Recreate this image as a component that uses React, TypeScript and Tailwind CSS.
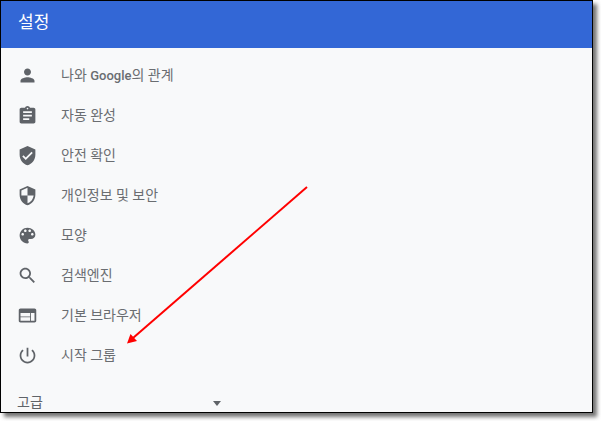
const items = [
  { label: <>나와 <span className="text-[13px] font-medium">Google</span>의 관계</>, d: "M12 12c2.21 0 4-1.79 4-4s-1.79-4-4-4-4 1.79-4 4 1.79 4 4 4zm0 2c-2.67 0-8 1.34-8 4v2h16v-2c0-2.66-5.33-4-8-4z" },
  { label: "자동 완성", d: "M19 3h-4.18C14.4 1.84 13.3 1 12 1c-1.3 0-2.4.84-2.82 2H5c-1.1 0-2 .9-2 2v14c0 1.1.9 2 2 2h14c1.1 0 2-.9 2-2V5c0-1.1-.9-2-2-2zm-7 0c.55 0 1 .45 1 1s-.45 1-1 1-1-.45-1-1 .45-1 1-1zm2 14H7v-2h7v2zm3-4H7v-2h10v2zm0-4H7V7h10v2z" },
  { label: "안전 확인", d: "M12 1L3 5v6c0 5.55 3.84 10.74 9 12 5.16-1.26 9-6.45 9-12V5l-9-4zm-2 16l-4-4 1.41-1.41L10 14.17l6.59-6.59L18 9l-8 8z" },
  { label: "개인정보 및 보안", d: "M12 1L3 5v6c0 5.55 3.84 10.74 9 12 5.16-1.26 9-6.45 9-12V5l-9-4zm0 10.99h7c-.53 4.12-3.28 7.79-7 8.94V12H5V6.3l7-3.11v8.8z" },
  { label: "모양", d: "M12 3c-4.97 0-9 4.03-9 9s4.03 9 9 9c.83 0 1.5-.67 1.5-1.5 0-.39-.15-.74-.39-1.01-.23-.26-.38-.61-.38-.99 0-.83.67-1.5 1.5-1.5H16c2.76 0 5-2.24 5-5 0-4.42-4.03-8-9-8zm-5.5 9c-.83 0-1.5-.67-1.5-1.5S5.67 9 6.5 9 8 9.67 8 10.5 7.33 12 6.5 12zm3-4C8.67 8 8 7.33 8 6.5S8.67 5 9.5 5s1.5.67 1.5 1.5S10.33 8 9.5 8zm5 0c-.83 0-1.5-.67-1.5-1.5S13.67 5 14.5 5s1.5.67 1.5 1.5S15.33 8 14.5 8zm3 4c-.83 0-1.5-.67-1.5-1.5S16.67 9 17.5 9s1.5.67 1.5 1.5-.67 1.5-1.5 1.5z" },
  { label: "검색엔진", d: "M15.5 14h-.79l-.28-.27C15.41 12.59 16 11.11 16 9.5 16 5.91 13.09 3 9.5 3S3 5.91 3 9.5 5.91 16 9.5 16c1.61 0 3.09-.59 4.23-1.57l.27.28v.79l5 4.99L20.49 19l-4.99-5zm-6 0C7.01 14 5 11.99 5 9.5S7.01 5 9.5 5 14 7.01 14 9.5 11.99 14 9.5 14z" },
  { label: "기본 브라우저", d: "M20 4H4c-1.1 0-1.99.9-1.99 2L2 18c0 1.1.9 2 2 2h16c1.1 0 2-.9 2-2V6c0-1.1-.9-2-2-2zm-5 14H4v-4h11v4zm0-5H4V9h11v4zm5 5h-4V9h4v9z" },
  { label: "시작 그룹", d: "M13 3h-2v10h2V3zm4.83 2.17l-1.42 1.42C17.99 7.86 19 9.81 19 12c0 3.87-3.13 7-7 7s-7-3.13-7-7c0-2.19 1.01-4.14 2.58-5.42L6.17 5.17C4.23 6.82 3 9.26 3 12c0 4.97 4.03 9 9 9s9-4.03 9-9c0-2.74-1.23-5.18-3.17-6.83z" },
];

export default function App() {
  return (
    <div className="relative w-[601px] h-[421px] bg-white overflow-hidden font-['Roboto','Noto_Sans_CJK_KR',sans-serif]">
      {/* Window */}
      <div className="flex flex-col w-[593px] h-[413px] border border-black bg-[#f8f9fa] overflow-hidden shadow-[4px_4px_4px_rgba(0,0,0,0.55)]">
        <header className="flex items-center h-[47px] shrink-0 pl-[17px] pb-[4px] bg-[#3367d6] text-white text-[17px]">설정</header>

        <nav className="pt-[7px] shrink-0">
          {items.map((item, i) => (
            <div key={i} className="flex items-center h-10 pl-[14px]">
              <span className="flex items-center justify-center w-6 h-6 shrink-0">
                <svg className="w-[21px] h-[21px] text-[#5f6368]" viewBox="0 0 24 24" fill="currentColor">
                  <path d={item.d} />
                </svg>
              </span>
              <span className="ml-[22px] text-[14px] text-[#6a6d71]">{item.label}</span>
            </div>
          ))}
        </nav>

        {/* Advanced */}
        <div className="flex items-center w-[220px] h-5 shrink-0 mt-[17px] pl-[16px] text-[14px] leading-5 text-[#5f6368]">
          <span className="flex-1">고급</span>
          <span className="w-0 h-0 mt-[3px] border-x-4 border-t-[5px] border-x-transparent border-t-[#5f6368]" />
        </div>
      </div>

      {/* Annotation arrow */}
      <svg className="absolute inset-0" width="601" height="421" viewBox="0 0 601 421">
        <line x1="307" y1="187" x2="133" y2="338" stroke="#f00" strokeWidth="2" />
        <polygon points="127,343.5 130.5,334 137,341" fill="#f00" />
      </svg>
    </div>
  );
}
